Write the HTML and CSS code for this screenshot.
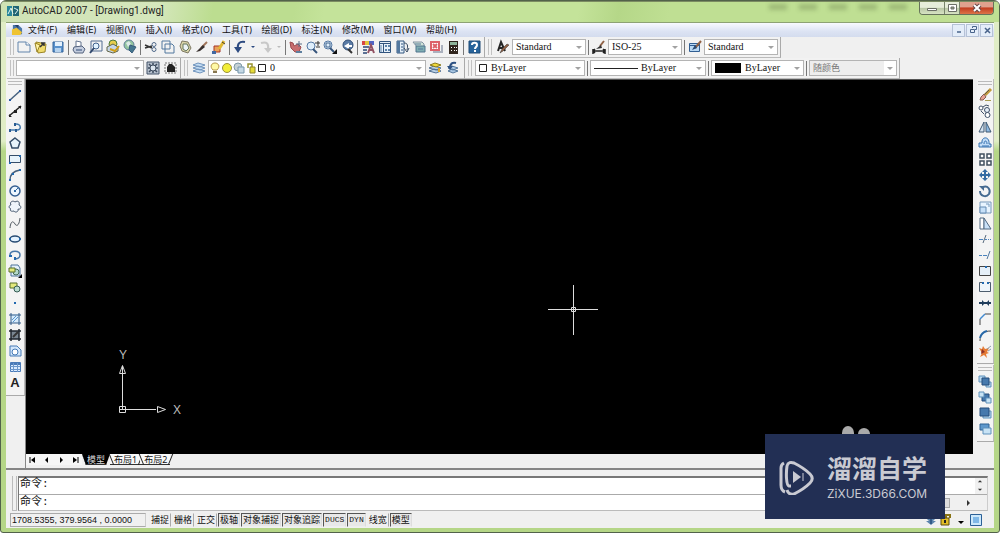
FILE: index.html
```html
<!DOCTYPE html>
<html lang="zh-CN">
<head>
<meta charset="utf-8">
<title>AutoCAD 2007 - [Drawing1.dwg]</title>
<link rel="stylesheet" href="styles.css">
</head>
<body>
<svg class="sprite" aria-hidden="true">
  <defs>
    <linearGradient id="paper" x1="0" y1="0" x2="1" y2="1"><stop offset="0" stop-color="#fff"/><stop offset="1" stop-color="#9fc4e8"/></linearGradient>
  </defs>
  <symbol id="new" viewBox="0 0 16 16"><path d="M2 3h8l4 3v7H2z" fill="url(#paper)" stroke="#6285ac"/><path d="M10 3v3h4" fill="#fff" stroke="#6285ac"/></symbol>
  <symbol id="open" viewBox="0 0 16 16"><path d="M3 3l10 2-1 8-7 1z" fill="#f1dc6d" stroke="#9a8425"/><path d="M2 4l5 2-3 7z" fill="#fff3a8" stroke="#9a8425"/><path d="M7 8l4-4h-3m3 0v3" fill="none" stroke="#333" stroke-width="1.5"/></symbol>
  <symbol id="save" viewBox="0 0 16 16"><path d="M3 3h10v10H3z" fill="#5a92cc" stroke="#34649b"/><path d="M5 3h7v4H5z" fill="#e4f1fd"/><path d="M5 9h6v4H5z" fill="#b7d3ee"/></symbol>
  <symbol id="print" viewBox="0 0 16 16"><path d="M5 2l5 1v5H5z" fill="#fff" stroke="#64748f"/><path d="M3 8l8-1 3 3-2 4H4l-2-3z" fill="#c4cdde" stroke="#56647f"/><path d="M5 11h6" stroke="#354e79"/></symbol>
  <symbol id="preview" viewBox="0 0 16 16"><path d="M3 2h11v10H3z" fill="url(#paper)" stroke="#536c91"/><circle cx="8" cy="7" r="3" fill="#e2f3ff" stroke="#40618d"/><path d="M6 9l-4 5" stroke="#30486d" stroke-width="2"/></symbol>
  <symbol id="publish" viewBox="0 0 16 16"><circle cx="8" cy="5" r="4" fill="#e6cd4d" stroke="#4b793e"/><path d="M2 8l6-3 5 3v4l-5 2-6-2z" fill="#c6d6e8" stroke="#646747"/><path d="M5 10l5 2 4-5" fill="none" stroke="#cf9e18" stroke-width="2"/></symbol>
  <symbol id="globe" viewBox="0 0 16 16"><circle cx="7" cy="6" r="5" fill="#94c6a1" stroke="#607e99"/><path d="M4 4l3-2 2 3-3 3z" fill="#dce9e7"/><path d="M8 6l6 2-4 6-3-3z" fill="#45768f" stroke="#375d7b"/></symbol>
  <symbol id="cut" viewBox="0 0 16 16"><path d="M2 6l7 3m0-2l-7 2" stroke="#333" stroke-width="1.5"/><circle cx="11" cy="5.500" r="2" fill="none" stroke="#516a8a"/><circle cx="11" cy="10.500" r="2" fill="none" stroke="#516a8a"/></symbol>
  <symbol id="copyclip" viewBox="0 0 16 16"><path d="M2 2h8v8H2zM5 5h7l2 2v7H5z" fill="url(#paper)" stroke="#52799f"/></symbol>
  <symbol id="paste" viewBox="0 0 16 16"><path d="M3 7l2-5 6 1 3 6-3 5-6-2z" fill="#d9d4a9" stroke="#7d7963"/><path d="M6 5h4l2 4-3 3-3-2z" fill="#edf4f7" stroke="#65775f"/></symbol>
  <symbol id="brush" viewBox="0 0 16 16"><path d="M13 3L7 9" stroke="#a2765b" stroke-width="2"/><path d="M9 6l2 2-5 4-4 1z" fill="#38302e"/></symbol>
  <symbol id="block" viewBox="0 0 16 16"><path d="M3 7h6v6H3z" fill="#eaa15a" stroke="#a43427"/><path d="M13 2l-5 8" stroke="#e0b833" stroke-width="3"/><path d="M11 3l3 2" stroke="#473c25"/><path d="M1 12h4v3H1z" fill="#4168a1"/></symbol>
  <symbol id="undo" viewBox="0 0 16 16"><path d="M13 3C7 2 5 5 6 11" fill="none" stroke="#2d4b81" stroke-width="2"/><path d="M2 8h8l-4 6z" fill="#2d4b81"/></symbol>
  <symbol id="redo" viewBox="0 0 16 16"><path d="M3 4c6-2 8 1 7 7" fill="none" stroke="#c8c8c8" stroke-width="2"/><path d="M6 9h8l-4 5z" fill="#c8c8c8"/></symbol>
  <symbol id="pan" viewBox="0 0 16 16"><path d="M2 3l3 1 1 3 4-2 3 3-2 5H7L3 9z" fill="#c76e70" stroke="#9d4b4e"/><path d="M8 12h6v2H8z" fill="#5f7f9e"/><path d="M11 2v6M8 5h6" stroke="#5a6f87"/></symbol>
  <symbol id="zoomrt" viewBox="0 0 16 16"><circle cx="6" cy="7" r="4" fill="#dfeefb" stroke="#5679a4"/><path d="M8 10l4 4" stroke="#35547b" stroke-width="2"/><path d="M10 4h5m-2-2v5m-2 1h4" stroke="#333"/></symbol>
  <symbol id="zoomwin" viewBox="0 0 16 16"><circle cx="6" cy="6" r="4" fill="#dfeefb" stroke="#5679a4"/><path d="M4 4h4v4H4z" fill="none" stroke="#41628a"/><path d="M8 9l4 4" stroke="#35547b" stroke-width="2"/><path d="M15 10v5h-5z" fill="#111"/></symbol>
  <symbol id="zoomprev" viewBox="0 0 16 16"><circle cx="9" cy="6" r="5" fill="#5a7ba5" stroke="#314e76"/><path d="M5 7l5-3v2h3v2h-3v2z" fill="#fff"/><path d="M9 10l4 4" stroke="#333" stroke-width="2"/></symbol>
  <symbol id="props" viewBox="0 0 16 16"><path d="M2 2h3v4H2z" fill="#d64646"/><path d="M5 2h4v4H5z" fill="#e2c63c"/><path d="M9 2h5v4H9z" fill="#5065c6"/><path d="M3 8h6m-6 3h4m-4 3h4" stroke="#5c7194" stroke-width="2"/><path d="M8 14l3-8 3 8m-5-3h4" fill="none" stroke="#925263" stroke-width="2"/></symbol>
  <symbol id="dc" viewBox="0 0 16 16"><path d="M2.500 2.500h11v11h-11z" fill="#e7f1fa" stroke="#31547e"/><path d="M2 4.500h12M6.500 4v10" stroke="#31547e"/><path d="M4 6v7" stroke="#5c83ab"/><path d="M8 6h2v2H8zm3 0h2v2h-2zM8 10h2v2H8zm3 0h2v2h-2z" fill="#5c83ab"/></symbol>
  <symbol id="palette" viewBox="0 0 16 16"><path d="M3 2h7v12H3z" fill="#e7f1fa" stroke="#31547e"/><path d="M3 2h3v12H3z" fill="#53789f"/><path d="M7 5h2m-2 3h2m-2 3h2" stroke="#31547e"/><path d="M10 4c4 0 4 3 3 7m-3-2l3 4 2-4" fill="none" stroke="#33475f"/></symbol>
  <symbol id="sheet" viewBox="0 0 16 16"><path d="M2 3h9l2 2v3H6z" fill="#cfe3d8" stroke="#8493a4"/><path d="M5 7h9v6H5z" fill="#7eadb2" stroke="#50758e"/><path d="M4 5h6m-3 5h5" stroke="#56799a"/></symbol>
  <symbol id="markup" viewBox="0 0 16 16"><path d="M3 3h8v8H3z" fill="#fff" stroke="#dd6069" stroke-width="2"/><path d="M5 5l4 4m0-4l-4 4" stroke="#dd6069" stroke-width="2"/><path d="M5 13h9V6" fill="none" stroke="#abb1be" stroke-width="2"/></symbol>
  <symbol id="calc" viewBox="0 0 16 16"><path d="M4 2h9v13H4z" fill="#30251e"/><path d="M5 3h7v3H5z" fill="#8eb39a"/><path d="M6 8h1v1H6zm3 0h1v1H9zm2 0h1v1h-1zM6 11h1v1H6zm3 0h1v1H9zm2 0h1v1h-1z" fill="#fff"/></symbol>
  <symbol id="help" viewBox="0 0 16 16"><path d="M3 2h11v12H3z" fill="#28649b" stroke="#1e4b77"/><path d="M6 6c0-3 5-3 5 0 0 2-2 2-2 4m0 1v2" fill="none" stroke="#fff" stroke-width="2"/></symbol>
  <symbol id="style" viewBox="0 0 16 16"><path d="M3 12l3-9 4 9M4 9h5" fill="none" stroke="#252525" stroke-width="2"/><path d="M14 6l-6 6-3 2 2-4 5-5z" fill="#8f6044" stroke="#333" stroke-width=".5"/></symbol>
  <symbol id="dim" viewBox="0 0 16 16"><path d="M2 10v5m12-5v5M2 12h12M4 10l-2 2 2 2m8-4l2 2-2 2" fill="none" stroke="#222" stroke-width="1.500"/><path d="M13 2l-4 5" stroke="#8f6044" stroke-width="2"/><path d="M10 6l1 3-6 1z" fill="#333"/></symbol>
  <symbol id="table-style" viewBox="0 0 16 16"><path d="M2.500 4.500h10v8h-10z" fill="#b9d8f3" stroke="#315e92"/><path d="M2 6.500h10" stroke="#315e92"/><path d="M14 2L8 9" stroke="#8f6044" stroke-width="2"/><path d="M8 6l2 3-5 2z" fill="#274a74"/></symbol>
  <symbol id="gear" viewBox="0 0 16 16"><path d="M2 2h12v12H2z" fill="#b6c0cd" stroke="#425269"/><path d="M8 3v10M3 8h10M4 4l8 8m0-8l-8 8" stroke="#3d4b5e" stroke-width="1.500"/><circle cx="8" cy="8" r="3" fill="#dce5ee" stroke="#3d4b5e"/></symbol>
  <symbol id="workspace" viewBox="0 0 16 16"><path d="M3 3h11v10H3z" fill="none" stroke="#777" stroke-dasharray="2 1"/><path d="M5 7l2-3h3l3 3v5H5z" fill="#222"/></symbol>
  <symbol id="layers" viewBox="0 0 16 16"><path d="M2 11l5-2 7 2-5 2zM2 8l5-2 7 2-5 2zM2 5l5-2 7 2-5 2z" fill="#c4ddf4" stroke="#7094bd"/></symbol>
  <symbol id="bulb" viewBox="0 0 12 14"><path d="M4 9C0 5 3 2 6 2s6 3 2 7z" fill="#fff9a5" stroke="#b69748"/><path d="M4 10h4v2H4z" fill="#877650"/></symbol>
  <symbol id="sun" viewBox="0 0 12 14"><circle cx="6" cy="7" r="4.500" fill="#f2ed38" stroke="#9b923a"/></symbol>
  <symbol id="freeze" viewBox="0 0 12 14"><circle cx="5" cy="6" r="4" fill="#c5d1d5" stroke="#7d98a7"/><path d="M5 6h6v6H5z" fill="#c5d9e5" stroke="#7898ae"/></symbol>
  <symbol id="lock" viewBox="0 0 12 14"><path d="M3 7V3h4v3" fill="none" stroke="#999431" stroke-width="1.500"/><path d="M5 6h5v6H5z" fill="#e4da38" stroke="#8d832c"/></symbol>
  <symbol id="swatch" viewBox="0 0 10 14"><path d="M1.500 3.500h7v7h-7z" fill="#fff" stroke="#222"/></symbol>
  <symbol id="layercur" viewBox="0 0 16 16"><path d="M2 11l5-2 7 2-5 2zM2 8l5-2 7 2-5 2z" fill="#bcd2e5" stroke="#506f94"/><path d="M3 5l5-2 6 2-5 2z" fill="#efd93c" stroke="#8a7a1d"/><path d="M12 8v4" stroke="#dfa727" stroke-width="2"/></symbol>
  <symbol id="layerprev" viewBox="0 0 16 16"><path d="M4 11l4-2 6 2-5 2zM4 8l4-2 6 2-5 2z" fill="#aac7e4" stroke="#53779c"/><path d="M12 3C8 2 6 4 6 8" fill="none" stroke="#2d5182" stroke-width="2"/><path d="M3 6h6L6 10z" fill="#2d5182"/></symbol>

  <symbol id="line" viewBox="0 0 16 16"><path d="M3 13l10-9" stroke="#45617f" stroke-width="1.500"/><path d="M2 12h2v2H2zM12 3h2v2h-2z" fill="#2459a1"/></symbol>
  <symbol id="xline" viewBox="0 0 16 16"><path d="M2 13L14 3" stroke="#222" stroke-width="1.500"/><path d="M2 11v3h3zM11 3h3v3zM7 7h3v3H7z" fill="#222"/></symbol>
  <symbol id="pline" viewBox="0 0 16 16"><path d="M3 11h7c5 0 4-6-1-6" fill="none" stroke="#467aad" stroke-width="1.500"/><path d="M2 10h2v3H2zm6 0h2v3H8zM7 4h2v3H7z" fill="#285b92"/></symbol>
  <symbol id="polygon" viewBox="0 0 16 16"><path d="M8 3l5 4-2 6H5L3 7z" fill="#e7f3fb" stroke="#354d69" stroke-width="1.500"/></symbol>
  <symbol id="rect" viewBox="0 0 16 16"><path d="M2.500 4.500h11v7h-11z" fill="#e7f3fb" stroke="#354d69"/><path d="M12 4h2v2h-2zM2 11h2v2H2z" fill="#2269b0"/></symbol>
  <symbol id="arc" viewBox="0 0 16 16"><path d="M3 13C3 7 7 4 13 3" fill="none" stroke="#475f79" stroke-width="1.500"/><path d="M2 12h2v2H2zM5 6h2v2H5zM12 2h2v2h-2z" fill="#2269b0"/></symbol>
  <symbol id="circle" viewBox="0 0 16 16"><circle cx="8" cy="8" r="5" fill="#eef7ff" stroke="#355f91" stroke-width="1.500"/><path d="M8 8l4-4" stroke="#3169a4"/><path d="M7 7h2v2H7z" fill="#3169a4"/></symbol>
  <symbol id="cloud" viewBox="0 0 16 16"><path d="M4 10C1 9 2 6 4 6 2 3 6 1 8 3c3-2 5 0 4 3 3 1 2 5-1 4 1 3-3 4-4 2-3 1-5-1-3-2z" fill="#eef4fa" stroke="#46586e"/></symbol>
  <symbol id="spline" viewBox="0 0 16 16"><path d="M3 13C4 4 7 7 8 9s4 3 5-6" fill="none" stroke="#515961"/></symbol>
  <symbol id="ellipse" viewBox="0 0 16 16"><ellipse cx="8" cy="8" rx="5" ry="3" fill="#e3f2ff" stroke="#294d74" stroke-width="1.500"/><path d="M2 7h2v2H2zm10 0h2v2h-2z" fill="#2269b0"/></symbol>
  <symbol id="ellarc" viewBox="0 0 16 16"><path d="M3 8C3 3 13 3 13 8c0 3-3 4-6 4" fill="none" stroke="#4777a9" stroke-width="1.500"/><path d="M2 8h3v2H2zm5 2h2v3H7z" fill="#2269b0"/></symbol>
  <symbol id="insert" viewBox="0 0 16 16"><path d="M4 2h7l2 3v8H4z" fill="#e3effb" stroke="#4c7299"/><circle cx="9" cy="9" r="3" fill="#b4d8ca" stroke="#426b58"/><path d="M2 5h6v4H2z" fill="#e2e87c" stroke="#59702d"/><path d="M15 11v4h-4z"/></symbol>
  <symbol id="makeblock" viewBox="0 0 16 16"><path d="M3 4h7v5H3z" fill="#e2e87c" stroke="#59702d"/><circle cx="10" cy="10" r="3" fill="#badccf" stroke="#365c55"/></symbol>
  <symbol id="point" viewBox="0 0 16 16"><path d="M7 7h2v2H7z" fill="#2269b0"/></symbol>
  <symbol id="hatch" viewBox="0 0 16 16"><path d="M4 3h9v9H4z" fill="#d7ebfb"/><path d="M2 4h12M2 12h12M4 2v12m8-12v12" stroke="#355d88"/><path d="M5 9l4-4m-3 6l5-5" stroke="#5a97cf"/></symbol>
  <symbol id="gradient" viewBox="0 0 16 16"><path d="M4 4h8v8H4z" fill="#7a8792"/><path d="M2 4h12M2 12h12M4 2v12m8-12v12" stroke="#1e252c" stroke-width="1.500"/><path d="M6 10l5-5" stroke="#333" stroke-width="2"/></symbol>
  <symbol id="region" viewBox="0 0 16 16"><path d="M3 3h7l4 4v6H3z" fill="#d4e7fb" stroke="#477bb6"/><circle cx="8" cy="9" r="3" fill="#fff" stroke="#477bb6"/></symbol>
  <symbol id="table" viewBox="0 0 16 16"><path d="M3.500 3.500h10v9h-10z" fill="#dcecff" stroke="#4a7bb8"/><path d="M3 5h10" stroke="#4a7bb8" stroke-width="2"/><path d="M3 7.500h10m-10 3h10M6.500 4v9m4-9v9" stroke="#6c98cb"/></symbol>

  <symbol id="erase" viewBox="0 0 16 16"><path d="M14 2L8 8" stroke="#c19a3c" stroke-width="3"/><path d="M12 3L7 8" stroke="#5f5946"/><path d="M7 7l2 3-3 3H3l1-3z" fill="#e6a194" stroke="#865e51"/><path d="M8 13.500h6" stroke="#a99c4f"/></symbol>
  <symbol id="copyobj" viewBox="0 0 16 16"><circle cx="4" cy="5" r="2" fill="#fff" stroke="#415168"/><circle cx="10" cy="7" r="2.500" fill="#e5eef8" stroke="#415168"/><circle cx="10.500" cy="12" r="2.500" fill="#fff" stroke="#415168"/><path d="M6 4l3-2 3 1M4 8l3 3" fill="none" stroke="#415168"/></symbol>
  <symbol id="mirror" viewBox="0 0 16 16"><path d="M7 3v10H2z" fill="#d6e4f1" stroke="#3f5972"/><path d="M9 3v10h5z" fill="#8fbae2" stroke="#3f5972"/></symbol>
  <symbol id="offset" viewBox="0 0 16 16"><path d="M2 12h12V9h-2c1-8-8-8-7-1H2z" fill="#c1dcf7" stroke="#3571af"/><path d="M5 11h7M7 9c0-4 3-4 3 0" fill="none" stroke="#3571af"/></symbol>
  <symbol id="array" viewBox="0 0 16 16"><path d="M3 3h4v4H3zm7 0h4v4h-4zM3 10h4v4H3zm7 0h4v4h-4z" fill="#fff" stroke="#41505f" stroke-width="1.500"/></symbol>
  <symbol id="move" viewBox="0 0 16 16"><path d="M8 3v10M3 8h10" stroke="#346ba3" stroke-width="2"/><path d="M5 5l3-3 3 3zM5 11l3 3 3-3zM5 5L2 8l3 3zm6 0l3 3-3 3z" fill="#346ba3"/></symbol>
  <symbol id="rotate" viewBox="0 0 16 16"><path d="M6 4c5-2 8 3 6 7-3 4-9 2-9-3" fill="none" stroke="#466b91" stroke-width="2"/><path d="M2 3h5v5z" fill="#466b91"/></symbol>
  <symbol id="scale" viewBox="0 0 16 16"><path d="M3 3h11v11H3z" fill="#e8f4ff" stroke="#7798ba"/><path d="M3 8h6v6H3z" fill="#c7e0f8" stroke="#658bb2"/><path d="M9 5h3v3" fill="none" stroke="#7798ba"/></symbol>
  <symbol id="stretch" viewBox="0 0 16 16"><path d="M3 3h4v11H3z" fill="#fff" stroke="#536a82"/><path d="M7 3l7 11H7z" fill="#c9e1f8" stroke="#536a82"/></symbol>
  <symbol id="trim" viewBox="0 0 16 16"><path d="M2 8.500h4m2 0h2m1 0h1m1 0h1" stroke="#4b83bd"/><path d="M9 4l-3 8" stroke="#576a7e"/></symbol>
  <symbol id="extend" viewBox="0 0 16 16"><path d="M2 8.500h3m1 0h4" stroke="#4b83bd"/><path d="M13 4l-3 8" stroke="#4f769d"/></symbol>
  <symbol id="breakpt" viewBox="0 0 16 16"><path d="M2.500 3.500h11v9h-11z" fill="#e5eff8" stroke="#444"/><path d="M8 3h2v2H8z" fill="#2269b0"/></symbol>
  <symbol id="break" viewBox="0 0 16 16"><path d="M6 3.500H2.500v9h11v-9h-3" fill="#eef5fb" stroke="#4d5d6e"/><path d="M5 3h2v2H5zm5 0h2v2h-2z" fill="#2269b0"/></symbol>
  <symbol id="join" viewBox="0 0 16 16"><path d="M2 8h12" stroke="#203d5c" stroke-width="2"/><path d="M5 5l3 3-3 3zM12 5L9 8l3 3z" fill="#203d5c"/></symbol>
  <symbol id="chamfer" viewBox="0 0 16 16"><path d="M3 14V8l5-5h6" fill="none" stroke="#444"/><path d="M3 8l5-5" stroke="#438ad0" stroke-width="1.500"/></symbol>
  <symbol id="fillet" viewBox="0 0 16 16"><path d="M3 14C3 7 6 4 14 4" fill="none" stroke="#444"/><path d="M3 11c1-4 3-6 7-7" fill="none" stroke="#2868a8" stroke-width="2"/></symbol>
  <symbol id="explode" viewBox="0 0 16 16"><path d="M2 5l3 1 1-3 2 3 4-1-2 4 2 1-3 1 1 4-3-3-4 2 2-4z" fill="#e57b35"/><path d="M5 6l3 3-4 2z" fill="#8f3228"/><path d="M10 6l4-3m-3 5l3-2" stroke="#8b9dad"/></symbol>
  <symbol id="front" viewBox="0 0 16 16"><path d="M2 3h6v6H2zM9 9h5v5H9z" fill="#b8d8f0" stroke="#5f91bb"/><path d="M5 5h7v7H5z" fill="#4679ad" stroke="#244d7a"/></symbol>
  <symbol id="back" viewBox="0 0 16 16"><path d="M5 5h7v7H5z" fill="#4679ad" stroke="#244d7a"/><path d="M2 3h5v5H2zM9 9h5v5H9z" fill="#c8e3f5" stroke="#5f91bb"/></symbol>
  <symbol id="above" viewBox="0 0 16 16"><path d="M6 6h8v7H6z" fill="#b8d8f0" stroke="#5f91bb"/><path d="M3 3h9v8H3z" fill="#4679ad" stroke="#244d7a"/></symbol>
  <symbol id="under" viewBox="0 0 16 16"><path d="M3 3h9v6H3z" fill="#5e98cc" stroke="#2e6294"/><path d="M6 7h8v6H6z" fill="#c8e3f5" stroke="#5f91bb"/></symbol>
</svg>

<div class="window">
  <header class="titlebar">
    <svg class="app-icon" viewBox="0 0 12 12"><path d="M0 1h5v10H0z" fill="#29869a"/><path d="M6 1h6v10H6z" fill="#206674"/><path d="M1 9l3-6 2 6M7 3l4 2-3 4" fill="none" stroke="#dff5f1"/></svg>
    <h1>AutoCAD 2007 - [Drawing1.dwg]</h1>
    <div class="ghosts"><i></i><i></i><i></i><i></i><i></i></div>
    <div class="win-buttons">
      <button aria-label="最小化"><svg viewBox="0 0 14 10"><path d="M2.500 5.500h9v2h-9z" fill="#fff" stroke="#6b6f66"/></svg></button>
      <button aria-label="最大化"><svg viewBox="0 0 14 10"><path d="M3.500 1.500h8v7h-8z" fill="#fff" stroke="#6b6f66"/><path d="M6 4h3v2H6z" fill="#98a08f" stroke="#6b6f66"/></svg></button>
      <button class="close" aria-label="关闭"><svg viewBox="0 0 14 10"><path d="M4 2l6 6m0-6L4 8" stroke="#694747" stroke-width="4"/><path d="M4 2l6 6m0-6L4 8" stroke="#fff" stroke-width="2"/></svg></button>
    </div>
  </header>

  <div class="client">
    <nav class="menubar">
      <svg class="doc-icon" viewBox="0 0 13 13"><path d="M2 1h6l4 4v6H2z" fill="#4b76a8"/><path d="M1 6l5-2 6 5-2 3H1z" fill="#efc331"/><path d="M4 1h4v4z" fill="#253e66"/></svg>
      <button>文件(F)</button><button>编辑(E)</button><button>视图(V)</button><button>插入(I)</button><button>格式(O)</button><button>工具(T)</button><button>绘图(D)</button><button>标注(N)</button><button>修改(M)</button><button>窗口(W)</button><button>帮助(H)</button>
      <div class="doc-buttons">
        <button aria-label="最小化文档"><svg viewBox="0 0 10 10"><path d="M3 7h4" stroke="#48638a" stroke-width="1.500"/></svg></button>
        <button aria-label="还原文档"><svg viewBox="0 0 10 10"><path d="M4.500 3V1.500h4v3H7M2.500 4.500h4v3h-4z" fill="none" stroke="#48638a"/></svg></button>
        <button aria-label="关闭文档"><svg viewBox="0 0 10 10"><path d="M3 3l5 5m0-5L3 8" stroke="#48638a" stroke-width="1.500"/></svg></button>
      </div>
    </nav>

    <div class="toolrow">
      <div class="toolbar">
        <button aria-label="新建"><svg><use href="#new"/></svg></button><button aria-label="打开"><svg><use href="#open"/></svg></button><button aria-label="保存"><svg><use href="#save"/></svg></button>
        <hr>
        <button aria-label="打印"><svg><use href="#print"/></svg></button><button aria-label="打印预览"><svg><use href="#preview"/></svg></button><button aria-label="发布"><svg><use href="#publish"/></svg></button><button aria-label="三维 DWF"><svg><use href="#globe"/></svg></button>
        <hr>
        <button aria-label="剪切"><svg><use href="#cut"/></svg></button><button aria-label="复制"><svg><use href="#copyclip"/></svg></button><button aria-label="粘贴"><svg><use href="#paste"/></svg></button><button aria-label="特性匹配"><svg><use href="#brush"/></svg></button><button aria-label="块编辑器"><svg><use href="#block"/></svg></button>
        <hr>
        <button aria-label="放弃"><svg><use href="#undo"/></svg></button><button class="drop" aria-label="放弃列表"></button><button aria-label="重做"><svg><use href="#redo"/></svg></button><button class="drop off" aria-label="重做列表"></button>
        <hr>
        <button aria-label="实时平移"><svg><use href="#pan"/></svg></button><button aria-label="实时缩放"><svg><use href="#zoomrt"/></svg></button><button aria-label="窗口缩放"><svg><use href="#zoomwin"/></svg></button><button aria-label="缩放上一个"><svg><use href="#zoomprev"/></svg></button>
        <hr>
        <button aria-label="特性"><svg><use href="#props"/></svg></button><button aria-label="设计中心"><svg><use href="#dc"/></svg></button><button aria-label="工具选项板"><svg><use href="#palette"/></svg></button><button aria-label="图纸集"><svg><use href="#sheet"/></svg></button><button aria-label="标记集"><svg><use href="#markup"/></svg></button><button aria-label="计算器"><svg><use href="#calc"/></svg></button>
        <hr>
        <button aria-label="帮助"><svg><use href="#help"/></svg></button>
      </div>
      <div class="toolbar">
        <button aria-label="文字样式"><svg><use href="#style"/></svg></button>
        <label class="combo w-style"><select aria-label="文字样式"><option>Standard</option></select></label>
        <hr>
        <button aria-label="标注样式"><svg><use href="#dim"/></svg></button>
        <label class="combo w-style"><select aria-label="标注样式"><option>ISO-25</option></select></label>
        <hr>
        <button aria-label="表格样式"><svg><use href="#table-style"/></svg></button>
        <label class="combo w-style"><select aria-label="表格样式"><option>Standard</option></select></label>
      </div>
    </div>

    <div class="toolrow">
      <div class="toolbar">
        <label class="combo w-space"><select aria-label="工作空间"><option></option></select></label>
        <button aria-label="工作空间设置"><svg><use href="#gear"/></svg></button><button aria-label="我的工作空间"><svg><use href="#workspace"/></svg></button>
      </div>
      <div class="toolbar layer-bar">
        <button aria-label="图层特性管理器"><svg><use href="#layers"/></svg></button>
        <label class="combo w-layer"><svg><use href="#bulb"/></svg><svg><use href="#sun"/></svg><svg><use href="#freeze"/></svg><svg><use href="#lock"/></svg><svg class="sw"><use href="#swatch"/></svg><select aria-label="图层"><option>0</option></select></label>
        <button aria-label="置为当前图层"><svg><use href="#layercur"/></svg></button><button aria-label="上一个图层"><svg><use href="#layerprev"/></svg></button>
      </div>
      <div class="toolbar">
        <label class="combo w-color"><svg class="sw"><use href="#swatch"/></svg><select aria-label="颜色"><option>ByLayer</option></select></label>
        <hr>
        <label class="combo w-ltype"><span class="stroke"></span><select aria-label="线型"><option>ByLayer</option></select></label>
        <hr>
        <label class="combo w-lweight"><span class="weight"></span><select aria-label="线宽"><option>ByLayer</option></select></label>
        <hr>
        <label class="combo w-plot"><select aria-label="打印样式" disabled><option>随颜色</option></select></label>
      </div>
    </div>

    <main class="work">
      <aside class="side">
        <div class="vbar">
          <button aria-label="直线"><svg><use href="#line"/></svg></button><button aria-label="构造线"><svg><use href="#xline"/></svg></button><button aria-label="多段线"><svg><use href="#pline"/></svg></button><button aria-label="正多边形"><svg><use href="#polygon"/></svg></button><button aria-label="矩形"><svg><use href="#rect"/></svg></button><button aria-label="圆弧"><svg><use href="#arc"/></svg></button><button aria-label="圆"><svg><use href="#circle"/></svg></button><button aria-label="修订云线"><svg><use href="#cloud"/></svg></button><button aria-label="样条曲线"><svg><use href="#spline"/></svg></button><button aria-label="椭圆"><svg><use href="#ellipse"/></svg></button><button aria-label="椭圆弧"><svg><use href="#ellarc"/></svg></button><button aria-label="插入块"><svg><use href="#insert"/></svg></button><button aria-label="创建块"><svg><use href="#makeblock"/></svg></button><button aria-label="点"><svg><use href="#point"/></svg></button><button aria-label="图案填充"><svg><use href="#hatch"/></svg></button><button aria-label="渐变色"><svg><use href="#gradient"/></svg></button><button aria-label="面域"><svg><use href="#region"/></svg></button><button aria-label="表格"><svg><use href="#table"/></svg></button><button class="mtext">A</button>
        </div>
      </aside>

      <section class="drawing">
        <div class="canvas">
          <svg class="ucs" viewBox="0 0 66 68"><path d="M4.500 18v44M2 61.500h36" fill="none" stroke="#ddd"/><path d="M1.500 58.500h6v6h-6zM1.500 25.500l3-8 3 8zM39.500 58.500l8 3-8 3z" fill="none" stroke="#ddd"/><text x="1" y="11">Y</text><text x="55" y="66">X</text></svg>
          <svg class="crosshair" viewBox="0 0 50 50"><path d="M25.500 0v50M0 24.500h50M23.500 22.500h4v4h-4z" fill="none" stroke="#ddd"/></svg>
        </div>
        <div class="tabs">
          <button class="nav" aria-label="第一个"><svg viewBox="0 0 8 8"><path d="M1 1v6" stroke="#000"/><path d="M6 1v6L2 4z"/></svg></button>
          <button class="nav" aria-label="上一个"><svg viewBox="0 0 8 8"><path d="M5 1v6L2 4z"/></svg></button>
          <button class="nav" aria-label="下一个"><svg viewBox="0 0 8 8"><path d="M3 1v6l3-3z"/></svg></button>
          <button class="nav" aria-label="最后一个"><svg viewBox="0 0 8 8"><path d="M7 1v6" stroke="#000"/><path d="M2 1v6l4-3z"/></svg></button>
          <button class="tab active">模型</button><button class="tab">布局1</button><button class="tab">布局2</button>
        </div>
      </section>

      <aside class="side right">
        <div class="vbar">
          <button aria-label="删除"><svg><use href="#erase"/></svg></button><button aria-label="复制对象"><svg><use href="#copyobj"/></svg></button><button aria-label="镜像"><svg><use href="#mirror"/></svg></button><button aria-label="偏移"><svg><use href="#offset"/></svg></button><button aria-label="阵列"><svg><use href="#array"/></svg></button><button aria-label="移动"><svg><use href="#move"/></svg></button><button aria-label="旋转"><svg><use href="#rotate"/></svg></button><button aria-label="缩放"><svg><use href="#scale"/></svg></button><button aria-label="拉伸"><svg><use href="#stretch"/></svg></button><button aria-label="修剪"><svg><use href="#trim"/></svg></button><button aria-label="延伸"><svg><use href="#extend"/></svg></button><button aria-label="打断于点"><svg><use href="#breakpt"/></svg></button><button aria-label="打断"><svg><use href="#break"/></svg></button><button aria-label="合并"><svg><use href="#join"/></svg></button><button aria-label="倒角"><svg><use href="#chamfer"/></svg></button><button aria-label="圆角"><svg><use href="#fillet"/></svg></button><button aria-label="分解"><svg><use href="#explode"/></svg></button>
        </div>
        <div class="vbar">
          <button aria-label="前置"><svg><use href="#front"/></svg></button><button aria-label="后置"><svg><use href="#back"/></svg></button><button aria-label="置于对象之上"><svg><use href="#above"/></svg></button><button aria-label="置于对象之下"><svg><use href="#under"/></svg></button>
        </div>
      </aside>
    </main>

    <section class="command">
      <div class="grip"></div>
      <div class="lines">
        <div class="history"><span>命令:</span><div class="spin"><svg viewBox="0 0 8 14"><path d="M4 2l2 2H2zM4 12l2-2H2z" fill="#333"/></svg></div></div>
        <div class="prompt"><label for="cmd">命令:</label><input id="cmd" type="text"><div class="hscroll"><i></i><svg viewBox="0 0 8 8"><path d="M3 1l3 3-3 3z" fill="#333"/></svg></div></div>
      </div>
    </section>

    <footer class="status">
      <output>1708.5355, 379.9564 , 0.0000</output>
      <div class="toggles">
        <button>捕捉</button><button>栅格</button><button>正交</button><button class="on">极轴</button><button class="on">对象捕捉</button><button class="on">对象追踪</button><button class="on latin">DUCS</button><button class="on latin">DYN</button><button>线宽</button><button class="on">模型</button>
      </div>
      <div class="tray">
        <svg viewBox="0 0 12 12"><path d="M1 4h10L8 7h3l-5 4-5-4h3z" fill="#5c84ae"/><path d="M6 1v9" stroke="#345b88" stroke-width="2"/></svg>
        <svg viewBox="0 0 12 12"><path d="M6 5V1h4v3" fill="none" stroke="#897415" stroke-width="2"/><path d="M1 4h8v7H1z" fill="#e1bd27" stroke="#5f4e0d"/><path d="M5 6v3" stroke="#222" stroke-width="2"/></svg>
        <svg viewBox="0 0 12 12"><path d="M3 7h6l-3 3z"/></svg>
        <svg viewBox="0 0 12 12"><path d="M.5.500h11v11H.500z" fill="#cce8fb" stroke="#2b6097"/><path d="M3 3h6v6H3z" fill="#80b8e7"/></svg>
      </div>
    </footer>
  </div>
</div>

<div class="badge">
  <svg class="ears" viewBox="0 0 30 8"><ellipse cx="7" cy="7" rx="6" ry="7"/><ellipse cx="23" cy="8" rx="6" ry="6"/></svg>
  <svg class="play" viewBox="0 0 36 36"><path d="M5 4C3 5 2 6 2 9v17c0 4 1 6 4 7"/><path d="M12 27h-2c-3-1-3-13-2-20 1-4 4-4 7-3 6 3 11 6 16 11 3 3 3 6 0 9-5 5-10 8-16 11-4 1-6-1-7-4"/><path class="solid" d="M14 12l8 6-8 6z"/><path class="bar" d="M24 14v8"/></svg>
  <div class="brand"><strong>溜溜自学</strong><span>ZiXUE.3D66.COM</span></div>
</div>
</body>
</html>
```

FILE: styles.css
```css
* { box-sizing: border-box; }

body {
  margin: 0;
  font-family: "Noto Sans", "Noto Sans CJK SC", sans-serif;
  font-size: 9px;
  line-height: 12px;
  color: #111;
}

button, input, select {
  margin: 0;
  padding: 0;
  border: 0;
  background: none;
  color: inherit;
  font: inherit;
}

svg { display: block; }
.sprite { display: none; }

.window {
  display: flex;
  flex-direction: column;
  height: 100vh;
  min-height: 500px;
  padding: 0 5px 4px;
  border: 1px solid #52624a;
  border-radius: 6px 6px 3px 3px;
  background: linear-gradient(#e0edc6 0, #e0edc6 140px, #b5d687 150px, #b5d687 100%);
  overflow: hidden;
}

/* title bar */
.titlebar {
  display: flex;
  align-items: flex-start;
  height: 21px;
  flex: none;
  margin: 0 -5px;
  padding-left: 6px;
  border-top: 1px solid #7b8b62;
  background: linear-gradient(100deg, #cfe2b5 0, #d5e7bc 155px, #bcdd90 210px, #bcdd90 290px, #c4e39a 320px, #c4e39a 570px, #b5d788 610px, #bfdf93 660px, #bfdf93 100%);
}
.app-icon { width: 12px; height: 12px; margin-top: 3px; }
h1 {
  margin: 1px 0 0 3px;
  font-family: Roboto, sans-serif;
  font-size: 10px;
  font-weight: 400;
  line-height: 16px;
  color: #222;
}
.ghosts { display: flex; gap: 12px; margin: 2px 12px 0 auto; filter: blur(2px); opacity: .4; }
.ghosts i { width: 18px; height: 6px; background: #6d8450; }
.win-buttons {
  display: flex;
  margin-right: 5px;
  border: 1px solid #66735b;
  border-top: 0;
  border-radius: 0 0 4px 4px;
  overflow: hidden;
}
.win-buttons button {
  display: grid;
  place-items: center;
  width: 25px;
  height: 12px;
  border-right: 1px solid #77846a;
  background: linear-gradient(#e6edda 45%, #b9c7a6 50%, #d7e3c3);
}
.win-buttons button:nth-child(2) { width: 15px; }
.win-buttons .close { width: 33px; border: 0; background: linear-gradient(#e0a18e 40%, #c33e21 50%, #dc7448); }
.win-buttons svg { width: 14px; height: 10px; }

.client {
  display: flex;
  flex: 1;
  flex-direction: column;
  min-height: 0;
  background: #f0f0f0;
}

/* menu */
.menubar {
  display: flex;
  align-items: center;
  flex: none;
  height: 15px;
  padding-left: 5px;
  border-top: 1px solid #8da274;
  background: linear-gradient(#f8faff, #dce3f3 60%, #d4dcee);
  font-family: Inter, "Noto Sans CJK SC", sans-serif;
}
.doc-icon { width: 12px; height: 12px; margin-right: 5px; }
.menubar > button { margin-right: 9px; white-space: nowrap; }
.doc-buttons { display: flex; gap: 1px; margin-left: auto; padding-right: 1px; }
.doc-buttons button {
  display: grid;
  place-items: center;
  width: 13px;
  height: 13px;
  border: 1px solid #b5c2d7;
  background: #e4edf9;
}
.doc-buttons svg { width: 10px; height: 10px; }

/* horizontal toolbars */
.toolrow { display: flex; flex: none; height: 21px; padding-left: 1px; }
.toolbar {
  display: flex;
  align-items: center;
  gap: 1px;
  padding: 0 2px 0 9px;
  border-right: 1px solid #aaa;
  border-bottom: 1px solid #bbb;
  background: linear-gradient(#c2c2c2, #c2c2c2) 3px 2px / 1px 16px no-repeat,
              linear-gradient(#c2c2c2, #c2c2c2) 6px 2px / 1px 16px no-repeat, #f2f2f2;
}
.toolbar + .toolbar { padding-left: 10px; }
.toolbar hr { width: 1px; height: 15px; margin: 0 1px; border: 0; background: #777; }
.toolbar button svg, .vbar button svg { width: 16px; height: 16px; }
.toolbar .drop { width: 8px; height: 16px; }
.drop::after {
  content: "";
  display: block;
  width: 0;
  margin: 2px auto 0;
  border: 2px solid transparent;
  border-top-color: #2d4b81;
}
.drop.off::after { border-top-color: #bbb; }

.combo {
  position: relative;
  display: flex;
  align-items: center;
  height: 16px;
  border: 1px solid #b4b4b4;
  background: #fff;
  font-family: "Liberation Serif", "Noto Sans CJK SC", serif;
  font-size: 10px;
}
.combo::after {
  content: "";
  position: absolute;
  right: 3px;
  top: 6px;
  border: 3px solid transparent;
  border-top-color: #a2a2a2;
}
.combo select { flex: 1; min-width: 0; height: 14px; padding-left: 3px; appearance: none; opacity: 1; }
.combo svg { width: 12px; height: 14px; }
.combo .sw { width: 10px; margin-left: 2px; }
.combo select:disabled { height: 14px; margin-right: 12px; background: #eee; color: #777; font: 9px/14px "Noto Sans CJK SC", sans-serif; }
.w-style { width: 74px; }
.w-space { width: 128px; }
.w-layer { width: 218px; }
.w-color { width: 110px; }
.w-ltype { width: 116px; }
.w-lweight { width: 93px; }
.w-plot { width: 88px; }
.combo.w-layer .sw { margin: 0; }
.layer-bar { padding-right: 4px; }
.stroke { width: 44px; height: 1px; margin-left: 3px; background: #222; }
.weight { width: 26px; height: 10px; margin: 0 1px 0 3px; background: #000; }

/* work area */
.work { display: flex; flex: 1; min-height: 0; }
.side { width: 20px; flex: none; border-right: 1px solid #888; }
.side.right { width: 21px; padding-left: 4px; border: 0; }
.vbar {
  display: flex;
  flex-direction: column;
  align-items: center;
  padding: 8px 1px 4px;
  border-right: 1px solid #bbb;
  border-bottom: 1px solid #aaa;
  background: linear-gradient(#bbb, #bbb) center 2px / 14px 1px no-repeat,
              linear-gradient(#bbb, #bbb) center 5px / 14px 1px no-repeat, #f4f4f4;
}
.vbar + .vbar { margin-top: 1px; }
.mtext { height: 16px; font: 700 13px/16px "Liberation Sans", sans-serif; color: #222; }
.drawing { display: flex; flex: 1; flex-direction: column; min-width: 0; }
.canvas {
  position: relative;
  flex: 1;
  min-height: 0;
  border-top: 1px solid #555;
  background: #000;
  overflow: hidden;
}
.ucs { position: absolute; left: 92px; bottom: 38px; width: 66px; height: 68px; fill: #bbb; font: 12px "Liberation Sans", sans-serif; }
.crosshair { position: absolute; left: 522px; top: 205px; width: 50px; height: 50px; }

.tabs { display: flex; flex: none; height: 11px; margin-bottom: 3px; background: #f0f0f0; }
.nav { display: grid; place-items: center; width: 14px; background: #f6f6f6; }
.nav svg { width: 8px; height: 8px; }
.tab {
  position: relative;
  padding: 0 3px 0 4px;
  line-height: 11px;
  border-bottom: 1px solid #333;
  background: #f8f8f8;
}
.tab::before, .tab::after {
  content: "";
  position: absolute;
  top: 0;
  height: 11px;
  border-right: 1px solid #222;
}
.tab::before { left: 1px; transform: skewX(22deg); }
.tab::after { right: -1px; transform: skewX(-22deg); }
.tab.active { padding: 0 5px; background: #000; color: #ddd; clip-path: polygon(0 0, 100% 0, 86% 100%, 14% 100%); }

/* command line */
.command {
  display: flex;
  flex: none;
  padding: 6px 6px 0 6px;
  border-top: 2px solid #858585;
}
.grip { width: 5px; margin-right: 1px; border: 1px solid #bbb; border-top: 0; }
.lines {
  flex: 1;
  min-width: 0;
  border: 1px solid #777;
  border-top-width: 2px;
  border-right-color: #ccc;
  border-bottom-color: #bbb;
  background: #fff;
  font-family: "Liberation Mono", "Noto Sans CJK SC", monospace;
  font-size: 11px;
}
.history { display: flex; justify-content: space-between; height: 17px; padding-left: 1px; border-bottom: 1px solid #aaa; }
.prompt { display: flex; height: 15px; padding-left: 1px; line-height: 15px; }
.prompt input { flex: 1; min-width: 0; outline: 0; }
.spin { width: 12px; background: #f0f0f0; }
.spin svg { width: 10px; height: 15px; }
.hscroll { display: flex; align-items: center; justify-content: space-between; width: 45px; padding-right: 15px; background: #f0f0f0; }
.hscroll i { width: 8px; height: 10px; border: 1px solid #aaa; background: #ddd; }
.hscroll svg { width: 8px; height: 8px; }

/* status bar */
.status { display: flex; align-items: center; flex: none; height: 17px; padding: 0 12px 0 4px; }
.status output {
  width: 136px;
  height: 14px;
  padding-left: 1px;
  border: 1px solid #aaa;
  border-right-color: #ccc;
  font: 9px/13px "Liberation Sans", sans-serif;
  white-space: pre;
}
.toggles { display: flex; gap: 1px; margin-left: 3px; }
.toggles button { height: 14px; padding: 0 1px; border: 1px solid #eee; border-right-color: #aaa; line-height: 12px; }
.toggles .on { border-color: #555 #ddd #eee #555; background: #e8e8e8; }
.toggles .latin { font-family: "Liberation Mono", monospace; font-size: 8px; }
.tray { display: flex; gap: 3px; margin-left: auto; }
.tray svg { width: 12px; height: 12px; }

/* floating brand badge */
.badge {
  position: fixed;
  right: 55px;
  bottom: 14px;
  display: flex;
  align-items: center;
  gap: 12px;
  width: 180px;
  height: 85px;
  padding-left: 14px;
  background: #222f54;
  color: #c9cad2;
}
.ears { position: absolute; left: 76px; bottom: 100%; width: 30px; height: 8px; fill: #aaa; }
.play { width: 36px; height: 36px; fill: none; stroke: #c9cad2; stroke-width: 3; }
.play .solid { fill: #c9cad2; stroke: none; }
.play .bar { stroke-width: 1; }
.brand { display: flex; flex-direction: column; gap: 2px; padding-bottom: 4px; }
.brand strong { font: 700 25px/36px "Noto Sans CJK SC", sans-serif; }
.brand span { font: 12px/14px Inter, sans-serif; }
```
